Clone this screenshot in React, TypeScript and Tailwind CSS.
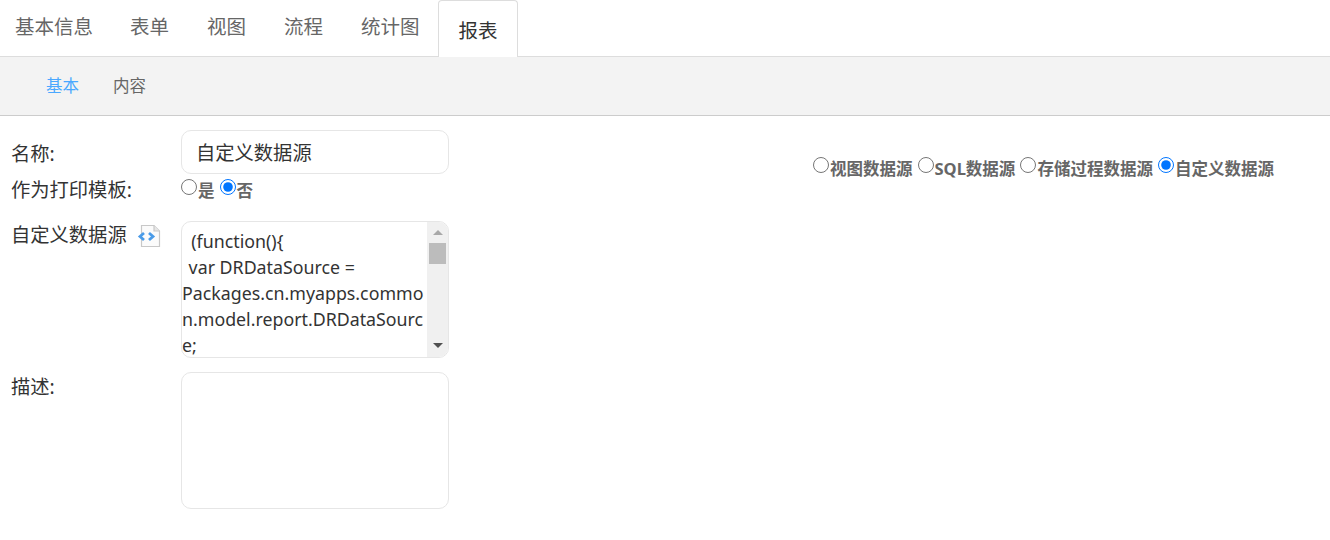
const font = "font-['Noto_Sans','Noto_Sans_CJK_SC',sans-serif]";

function Tab({ label, className }: { label: string; className: string }) {
  return (
    <div className={`h-[56px] leading-[54px] text-[19.5px] text-[#666] ${className}`}>
      {label}
    </div>
  );
}

function Radio({ label, checked, name }: { label: string; checked?: boolean; name: string }) {
  return (
    <label className="flex items-start">
      <input type="radio" name={name} defaultChecked={checked} className="m-0 h-4 w-4" />
      <span className="ml-[1px] mt-[2px] text-[16.5px] font-bold leading-[20px] text-[#666]">{label}</span>
    </label>
  );
}

function CodeIcon() {
  return (
    <svg width="24" height="24" viewBox="0 0 24 24" className="ml-[10px] mt-[3px] shrink-0">
      <path d="M4.5 1.5H17L22.5 7V22.5H4.5Z" fill="#fbfbfb" stroke="#c8c8c8" strokeWidth="1.2" />
      <path d="M17 1.5V7H22.5" fill="#e6e6e6" stroke="#c8c8c8" strokeWidth="1.2" />
      <polyline points="7,9 3,12.5 7,16" fill="none" stroke="#4a9be8" strokeWidth="2.8" />
      <polyline points="12,9 16,12.5 12,16" fill="none" stroke="#4a9be8" strokeWidth="2.8" />
    </svg>
  );
}

export default function App() {
  return (
    <div className={`h-[540px] w-[1330px] overflow-hidden bg-white ${font}`}>
      {/* tabs */}
      <div className="flex h-[57px] border-b border-[#ddd]">
        <Tab label="基本信息" className="pl-[15px] pr-[18px]" />
        <Tab label="表单" className="px-[19px]" />
        <Tab label="视图" className="px-[19px]" />
        <Tab label="流程" className="px-[19px]" />
        <Tab label="统计图" className="pl-[19px] pr-[18px]" />
        <div className="h-[57px] w-[80px] rounded-t-[4px] border border-b-0 border-[#ddd] bg-white pl-[20px] text-[19.5px] leading-[59px] text-[#333]">
          报表
        </div>
      </div>

      {/* sub tabs */}
      <div className="flex h-[59px] items-center border-b border-[#ccc] bg-[#f3f3f3] pl-[46px] text-[16.5px]">
        <span className="mr-[34px] text-[#4aa8ff]">基本</span>
        <span className="text-[#666]">内容</span>
      </div>

      <div className="flex">
        {/* form */}
        <div className="w-[449px] pl-[11px] pt-[14px] text-[19.3px] text-[#333]">
          <div className="flex h-[44px]">
            <div className="w-[170px] leading-[48px]">名称:</div>
            <div className="h-[44px] w-[268px] rounded-[10px] border border-[#e6e6e6] pl-[14px] text-[19.3px] leading-[44px]">
              自定义数据源
            </div>
          </div>
          <div className="mt-[3px] flex h-[44px]">
            <div className="w-[170px] leading-[26px]">作为打印模板:</div>
            <div className="mt-[2px] flex gap-[5px]">
              <Radio label="是" name="print" />
              <Radio label="否" name="print" checked />
            </div>
          </div>
          <div className="flex h-[137px]">
            <div className="flex w-[170px] items-start">
              <span className="leading-[28px]">自定义数据源</span>
              <CodeIcon />
            </div>
            <div className="flex h-[137px] w-[268px] overflow-hidden rounded-[10px] border border-[#e6e6e6]">
              <div className="w-[245px] shrink-0 overflow-hidden whitespace-pre pt-[6px] text-[17.8px] leading-[26px]">
                <div>{"  (function(){"}</div>
                <div className="pl-[2px]">{" var DRDataSource ="}</div>
                <div>Packages.cn.myapps.commo</div>
                <div>n.model.report.DRDataSourc</div>
                <div>e;</div>
              </div>
              <div className="flex w-[21px] flex-col items-center bg-[#f0f0f0]">
                <div className="mt-[8px] h-0 w-0 border-x-[5px] border-b-[5px] border-x-transparent border-b-[#a8a8a8]" />
                <div className="mt-[8px] h-[21px] w-[17px] bg-[#bcbcbc]" />
                <div className="mt-auto mb-[9px] h-0 w-0 border-x-[5px] border-t-[5px] border-x-transparent border-t-[#505050]" />
              </div>
            </div>
          </div>
          <div className="mt-[14px] flex h-[137px]">
            <div className="w-[170px] leading-[30px]">描述:</div>
            <div className="h-[137px] w-[268px] rounded-[10px] border border-[#e6e6e6]" />
          </div>
        </div>

        {/* data source type */}
        <div className="ml-[364px] mt-[41px] flex h-[24px] gap-[5px]">
          <Radio label="视图数据源" name="source" />
          <Radio label="SQL数据源" name="source" />
          <Radio label="存储过程数据源" name="source" />
          <Radio label="自定义数据源" name="source" checked />
        </div>
      </div>
    </div>
  );
}
